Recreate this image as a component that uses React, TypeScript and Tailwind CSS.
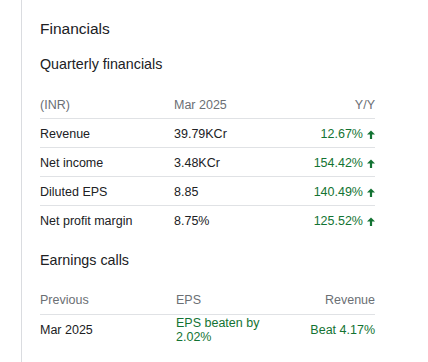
import React from "react";

const Arrow = () => (
  <svg viewBox="0 0 8 9" className="w-[8px] h-[9px] ml-[4px] shrink-0" fill="#137333">
    <path d="M0 4.6L4 0.4L8 4.6H5.1V9H2.9V4.6Z" />
  </svg>
);

const rows = [
  { label: "Revenue", value: "39.79KCr", change: "12.67%" },
  { label: "Net income", value: "3.48KCr", change: "154.42%" },
  { label: "Diluted EPS", value: "8.85", change: "140.49%" },
  { label: "Net profit margin", value: "8.75%", change: "125.52%" },
];

export default function App() {
  return (
    <div
      className="w-[428px] h-[362px] bg-white overflow-hidden"
      style={{ fontFamily: '"Liberation Sans", Arial, sans-serif' }}
    >
      <div className="ml-[21px] h-full border-l border-[#dadce0] pl-[18px] pt-[19px]">
        <div className="w-[335px]">
          <div className="text-[15.5px] leading-[20px] text-[#202124]">Financials</div>
          <div className="mt-[15px] text-[14.3px] leading-[20px] text-[#202124]">
            Quarterly financials
          </div>

          <div className="mt-[23px] text-[12.5px] leading-[16px]">
            <div className="grid grid-cols-[134px_1fr_auto] pb-[5px] text-[#6b6f74]">
              <div>(INR)</div>
              <div>Mar 2025</div>
              <div className="text-right">Y/Y</div>
            </div>
            {rows.map((r) => (
              <div
                key={r.label}
                className="grid grid-cols-[134px_1fr_auto] border-t border-[#e0e2e5] pt-[7px] pb-[5px] text-[#202124]"
              >
                <div>{r.label}</div>
                <div>{r.value}</div>
                <div className="flex items-center justify-end text-[#137333]">
                  <span>{r.change}</span>
                  <Arrow />
                </div>
              </div>
            ))}
          </div>

          <div className="mt-[16px] text-[14.3px] leading-[20px] text-[#202124]">
            Earnings calls
          </div>

          <div className="mt-[22px] text-[12.5px] leading-[16px]">
            <div className="grid grid-cols-[136px_106px_1fr] pb-[6px] text-[#6b6f74]">
              <div>Previous</div>
              <div>EPS</div>
              <div className="text-right">Revenue</div>
            </div>
            <div className="grid grid-cols-[136px_106px_1fr] items-center border-t border-[#e0e2e5] text-[#202124]">
              <div>Mar 2025</div>
              <div className="leading-[14px] text-[#137333] pt-[1px]">EPS beaten by 2.02%</div>
              <div className="text-right text-[#137333]">Beat 4.17%</div>
            </div>
          </div>
        </div>
      </div>
    </div>
  );
}
